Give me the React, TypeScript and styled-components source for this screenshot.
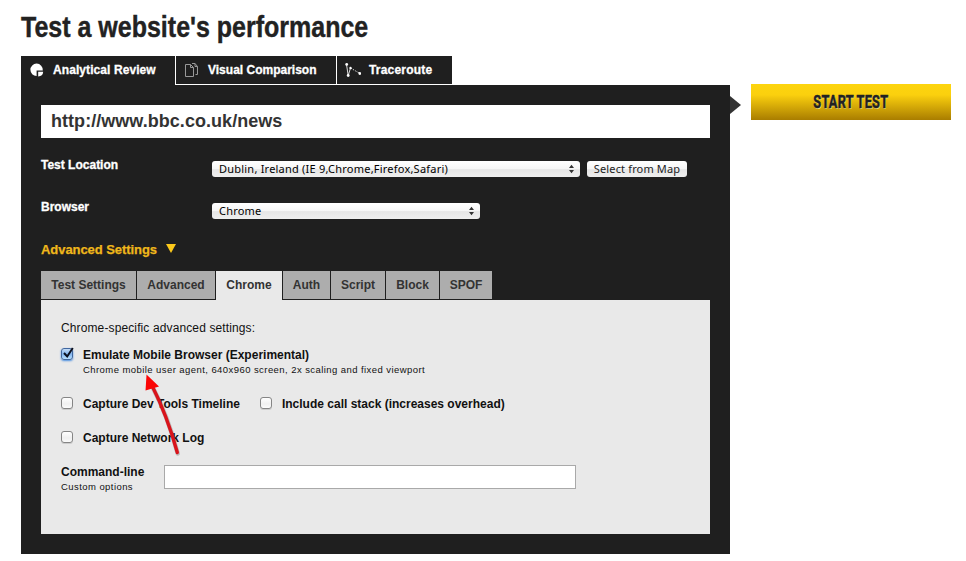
import React from "react";
import styled, { createGlobalStyle } from "styled-components";

const Global = createGlobalStyle`
  * { box-sizing: border-box; }
  body { margin: 0; background: #fff; font-family: "Liberation Sans", Arial, sans-serif; overflow: hidden; }
  button, input { font-family: inherit; margin: 0; }
`;

const Page = styled.main`
  width: 966px;
  height: 561px;
  padding-left: 21px;
  overflow: hidden;
  position: relative;
`;
const Title = styled.h1`
  margin: 0;
  height: 56px;
  padding-top: 9px;
  font-size: 29px;
  line-height: 36px;
  font-weight: 700;
  color: #222;
  white-space: nowrap;
  -webkit-text-stroke: 0.4px #222;
  transform: scaleX(0.862);
  transform-origin: 0 0;
`;
const Columns = styled.div`
  display: flex;
  align-items: flex-start;
`;
const Main = styled.section`
  width: 709px;
`;
const Tabs = styled.nav`
  display: flex;
  height: 29px;
`;
const Tab = styled.div<{ $w: number; $active?: boolean }>`
  width: ${(p) => p.$w}px;
  height: ${(p) => (p.$active ? 29 : 28)}px;
  margin-right: 1px;
  padding-left: 8px;
  display: flex;
  background: #1f1f1f;
  color: #fff;
  font-size: 12px;
  font-weight: 700;
  line-height: 28px;
  white-space: nowrap;
  -webkit-text-stroke: 0.3px #fff;
  svg { width: 16px; height: 16px; margin: 6px 8px 0 0; flex: none; }
`;
const Spaced = styled.span<{ $ls?: number }>`
  letter-spacing: ${(p) => p.$ls ?? 0}px;
`;
const Panel = styled.div`
  height: 469px;
  padding: 20px 20px 0;
  background: #1f1f1f;
`;
const Url = styled.div`
  height: 33px;
  padding-left: 10px;
  background: #fff;
  color: #333;
  font-size: 18px;
  font-weight: 700;
  line-height: 32px;
  letter-spacing: 0.04px;
`;
const FieldRow = styled.div`
  display: flex;
  height: 42px;
`;
const FieldLabel = styled.label`
  width: 171px;
  color: #fff;
  font-size: 12px;
  font-weight: 700;
  line-height: 14px;
  -webkit-text-stroke: 0.3px #fff;
`;
const Fields = styled.div`
  padding-top: 20px;
  height: 104px;
`;
const macFace = `
  height: 16px;
  margin-top: 3px;
  border: 0;
  border-radius: 3px;
  background: linear-gradient(#fff 0, #f6f6f6 48%, #e6e6e6 54%, #efefef 100%);
  font-family: "Noto Sans", sans-serif;
  font-size: 11px;
  line-height: 16px;
  white-space: nowrap;
`;
const Select = styled.div<{ $w: number }>`
  ${macFace}
  width: ${(p) => p.$w}px;
  padding: 0 5px 0 7px;
  display: flex;
  justify-content: space-between;
  color: #000;
  svg { width: 7px; height: 10px; margin-top: 3px; }
`;
const MapButton = styled.button`
  ${macFace}
  width: 100px;
  margin-left: 7px;
  padding: 0;
  color: #222;
  letter-spacing: 0.15px;
`;
const Advanced = styled.div`
  display: flex;
  height: 29px;
  color: #efb71b;
  font-size: 13px;
  font-weight: 700;
  line-height: 15px;
  letter-spacing: -0.06px;
  -webkit-text-stroke: 0.25px #efb71b;
  svg { width: 10px; height: 9px; margin: 2px 0 0 9px; }
`;
const SubTabs = styled.div`
  display: flex;
  height: 29px;
`;
const SubTab = styled.div<{ $w: number; $active?: boolean }>`
  width: ${(p) => p.$w}px;
  height: ${(p) => (p.$active ? 29 : 28)}px;
  background: ${(p) => (p.$active ? "#e9e9e9" : "#adadad")};
  margin-right: 1px;
  color: #333;
  font-size: 12px;
  font-weight: 700;
  line-height: 28px;
  text-align: center;
  white-space: nowrap;
`;
const Content = styled.div`
  height: 234px;
  padding: 21px 20px 0;
  background: #e9e9e9;
  color: #111;
  font-size: 12px;
  line-height: 14px;
`;
const Intro = styled.p`
  margin: 0;
  height: 27px;
  letter-spacing: 0.12px;
`;
const Option = styled.label`
  display: flex;
  font-weight: 700;
  white-space: nowrap;
`;
const Options = styled.div<{ $h: number }>`
  display: flex;
  gap: 20px;
  height: ${(p) => p.$h}px;
`;
const Box = styled.span<{ $on?: boolean }>`
  width: 12px;
  height: 12px;
  margin-right: 10px;
  border: 1px solid ${(p) => (p.$on ? "#41679f" : "#858585")};
  border-radius: 3px;
  background: ${(p) =>
    p.$on ? "linear-gradient(#c5dcf6, #82b4ee 50%, #b8e0ff)" : "linear-gradient(#fff, #f0f0f0 60%, #fbfbfb)"};
  box-shadow: ${(p) => (p.$on ? "0 1px 2px #4b8fe0" : "0 1px 0 #ccc")};
  flex: none;
  svg { display: block; width: 16px; height: 16px; margin: -4px 0 0 -1px; overflow: visible; }
`;
const Small = styled.div<{ $indent?: number }>`
  padding: 2px 0 0 ${(p) => p.$indent ?? 0}px;
  font-size: 9.5px;
  font-weight: 400;
  line-height: 12px;
  letter-spacing: 0.43px;
  white-space: nowrap;
`;
const Command = styled.div`
  display: flex;
`;
const CommandLabel = styled.div`
  width: 103px;
  font-weight: 700;
`;
const CommandInput = styled.input`
  width: 412px;
  height: 24px;
  border: 1px solid #a9a9a9;
  background: #fff;
`;
const Side = styled.aside`
  display: flex;
  padding-top: 28px;
  svg { width: 11px; height: 18px; margin: 12px 10px 0 0; }
`;
const Start = styled.button`
  width: 200px;
  height: 36px;
  border: 0;
  padding: 0;
  background: linear-gradient(#fdd50f 0, #fbd00e 30%, #a97d00 100%);
  color: #222;
  font: 700 18px/36px Roboto, sans-serif;
  text-shadow: 1px 1px 0 rgba(255, 240, 150, 0.85);
`;
const Narrow = styled.span`
  display: inline-block;
  letter-spacing: 0.3px;
  -webkit-text-stroke: 0.5px #222;
  transform: scaleX(0.71);
`;
const Annotation = styled.svg`
  position: absolute;
  left: 138px;
  top: 368px;
  width: 50px;
  height: 94px;
`;

const Arrows = () => (
  <svg viewBox="0 0 7 10"><path d="M1 4 3.5 0.8 6 4zM1 6 3.5 9.2 6 6z" fill="#333" /></svg>
);

const mainTabs = [
  { label: "Analytical Review", w: 154, ls: 0.08, icon: (
    <svg viewBox="0 0 16 16"><path d="M7.6 1.6A6.2 6.2 0 1 0 7.6 14V8.4H13.8A6.3 6.3 0 0 0 7.6 1.6Z" fill="#fff" /><path d="M9.2 9.8H14.2A5 5 0 0 1 9.2 14.4Z" fill="#fff" /></svg>
  ) },
  { label: "Visual Comparison", w: 160, ls: 0, icon: (
    <svg viewBox="0 0 16 16" fill="none" stroke="#999"><path d="M1.5 2.5H6.5L9.5 5.5V14.5H1.5ZM6.5 2.5V5.5H9.5M8 1.5H11L13.5 4.5V12.5H11.5M11 1.5V4.5H13.5" /></svg>
  ) },
  { label: "Traceroute", w: 115, ls: 0.2, icon: (
    <svg viewBox="0 0 16 16"><path d="M1.5 2.5 3.2 13.5 5.5 6" fill="none" stroke="#ddd" /><path d="M5.5 6 15 11.5" stroke="#ddd" strokeDasharray="1.5 1.2" /><g fill="#fff"><circle cx="1.7" cy="2.4" r="1.4" /><circle cx="3.2" cy="13.5" r="1.4" /><circle cx="5.5" cy="6" r="1.2" /><circle cx="14.8" cy="11.5" r="1.4" /></g></svg>
  ) },
];

const subTabs = [
  { label: "Test Settings", w: 95 },
  { label: "Advanced", w: 78 },
  { label: "Chrome", w: 66, active: true },
  { label: "Auth", w: 47 },
  { label: "Script", w: 54 },
  { label: "Block", w: 53 },
  { label: "SPOF", w: 52 },
];

export default function App() {
  return (
    <Page>
      <Global />
      <Title>Test a website's performance</Title>
      <Columns>
        <Main>
          <Tabs>
            {mainTabs.map((t, i) => (
              <Tab key={t.label} $w={t.w} $active={i === 0}>{t.icon}<Spaced $ls={t.ls}>{t.label}</Spaced></Tab>
            ))}
          </Tabs>
          <Panel>
            <Url>http://www.bbc.co.uk/news</Url>
            <Fields>
              <FieldRow>
                <FieldLabel>Test Location</FieldLabel>
                <Select $w={368}><Spaced $ls={0.22}>Dublin, Ireland (IE 9,Chrome,Firefox,Safari)</Spaced><Arrows /></Select>
                <MapButton>Select from Map</MapButton>
              </FieldRow>
              <FieldRow>
                <FieldLabel>Browser</FieldLabel>
                <Select $w={268}><Spaced $ls={0.22}>Chrome</Spaced><Arrows /></Select>
              </FieldRow>
            </Fields>
            <Advanced>
              Advanced Settings
              <svg viewBox="0 0 10 9"><path d="M0 0H10L5 9Z" fill="#fcc91b" /></svg>
            </Advanced>
            <SubTabs>
              {subTabs.map((t) => (
                <SubTab key={t.label} $w={t.w} $active={t.active}>{t.label}</SubTab>
              ))}
            </SubTabs>
            <Content>
              <Intro>Chrome-specific advanced settings:</Intro>
              <Option>
                <Box $on><svg viewBox="0 0 16 16"><path d="M3 8 6.2 11.5 11.8 3" fill="none" stroke="#0b1020" strokeWidth="2" /></svg></Box>
                Emulate Mobile Browser (Experimental)
              </Option>
              <Options $h={35}><Small $indent={22}>Chrome mobile user agent, 640x960 screen, 2x scaling and fixed viewport</Small></Options>
              <Options $h={34}>
                <Option><Box />Capture Dev Tools Timeline</Option>
                <Option><Box />Include call stack (increases overhead)</Option>
              </Options>
              <Options $h={34}><Option><Box />Capture Network Log</Option></Options>
              <Command>
                <CommandLabel>Command-line<Small>Custom options</Small></CommandLabel>
                <CommandInput aria-label="Command-line" />
              </Command>
            </Content>
          </Panel>
        </Main>
        <Side>
          <svg viewBox="0 0 11 18"><path d="M0 0 11 9 0 18Z" fill="#333" /></svg>
          <Start><Narrow>START TEST</Narrow></Start>
        </Side>
      </Columns>
      <Annotation viewBox="0 0 50 94">
        <path d="M14 18Q29.5 47 39.7 85.5" fill="none" stroke="#555" strokeOpacity=".3" strokeWidth="4.5" strokeLinecap="round" />
        <path d="M13.7 17Q29 47 39.3 84.5" fill="none" stroke="#d9141c" strokeWidth="3.4" strokeLinecap="round" />
        <path d="M8.5 6.5 21 18.5 7.5 22.5Z" fill="#fb0505" />
      </Annotation>
    </Page>
  );
}
